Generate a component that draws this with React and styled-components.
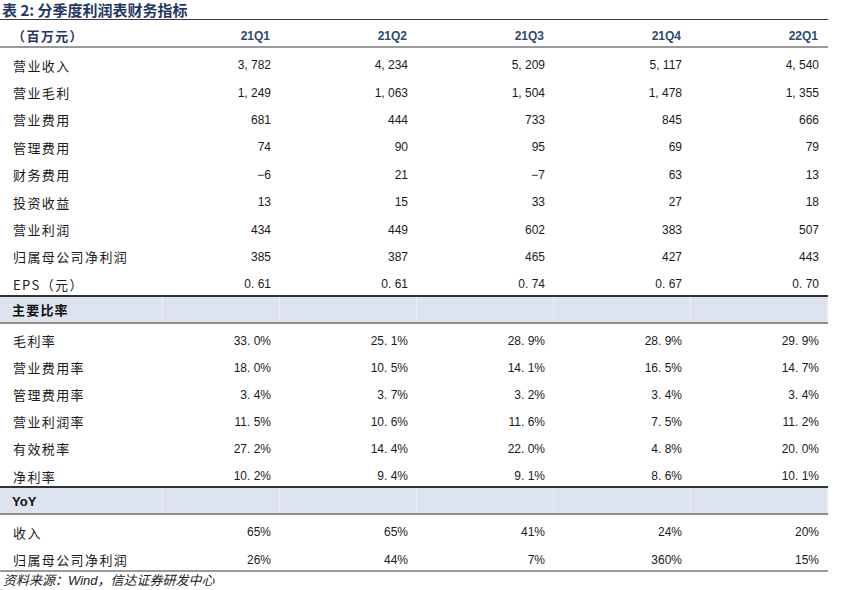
import React from 'react'
import styled, { createGlobalStyle } from 'styled-components'

const GlobalStyle = createGlobalStyle`
  html, body {
    margin: 0;
    padding: 0;
    background: #ffffff;
  }
  body {
    font-family: "Liberation Sans", "Noto Sans CJK SC", sans-serif;
    color: #111;
  }
`

const cols = ['21Q1', '21Q2', '21Q3', '21Q4', '22Q1']

const incomeRows = [
    ['营业收入', '3, 782', '4, 234', '5, 209', '5, 117', '4, 540'],
    ['营业毛利', '1, 249', '1, 063', '1, 504', '1, 478', '1, 355'],
    ['营业费用', '681', '444', '733', '845', '666'],
    ['管理费用', '74', '90', '95', '69', '79'],
    ['财务费用', '−6', '21', '−7', '63', '13'],
    ['投资收益', '13', '15', '33', '27', '18'],
    ['营业利润', '434', '449', '602', '383', '507'],
    ['归属母公司净利润', '385', '387', '465', '427', '443'],
    ['EPS（元）', '0. 61', '0. 61', '0. 74', '0. 67', '0. 70'],
]

const ratioRows = [
    ['毛利率', '33. 0%', '25. 1%', '28. 9%', '28. 9%', '29. 9%'],
    ['营业费用率', '18. 0%', '10. 5%', '14. 1%', '16. 5%', '14. 7%'],
    ['管理费用率', '3. 4%', '3. 7%', '3. 2%', '3. 4%', '3. 4%'],
    ['营业利润率', '11. 5%', '10. 6%', '11. 6%', '7. 5%', '11. 2%'],
    ['有效税率', '27. 2%', '14. 4%', '22. 0%', '4. 8%', '20. 0%'],
    ['净利率', '10. 2%', '9. 4%', '9. 1%', '8. 6%', '10. 1%'],
]

const yoyRows = [
    ['收入', '65%', '65%', '41%', '24%', '20%'],
    ['归属母公司净利润', '26%', '44%', '7%', '360%', '15%'],
]

function App() {
    const renderRows = (rows, h) =>
        rows.map((r) => (
            <Row key={r[0]} $h={h}>
                <Label>{r[0]}</Label>
                {r.slice(1).map((v, i) => (
                    <Value key={i}>{v}</Value>
                ))}
            </Row>
        ))

    return (
        <Page>
            <GlobalStyle />
            <Title>表 2: 分季度利润表财务指标</Title>
            <Table>
                <HeadRow>
                    <HeadLabel>（百万元）</HeadLabel>
                    {cols.map((c) => (
                        <HeadCell key={c}>{c}</HeadCell>
                    ))}
                </HeadRow>
                {renderRows(incomeRows, 27.4)}
                <Band>
                    <BandLabel>主要比率</BandLabel>
                    {cols.map((c) => (
                        <BandCell key={c} />
                    ))}
                </Band>
                {renderRows(ratioRows, 27.1)}
                <Band>
                    <BandLabel $latin>YoY</BandLabel>
                    {cols.map((c) => (
                        <BandCell key={c} />
                    ))}
                </Band>
                {renderRows(yoyRows, 27.5)}
            </Table>
            <Source>
                资料来源：<Wind>Wind</Wind>，信达证券研发中心
            </Source>
        </Page>
    )
}

export default App

const Page = styled.div`
    width: 855px;
    height: 590px;
    overflow: hidden;
`

const Title = styled.div`
    height: 19px;
    padding-left: 2px;
    font-family: "Noto Sans CJK SC", sans-serif;
    font-size: 15px;
    font-weight: 700;
    line-height: 19px;
    color: #1f3864;
    white-space: nowrap;
`

const Table = styled.div`
    width: 828px;
    border-top: 1px solid #3a3a3a;
    border-bottom: 2px solid #9a9a9a;
`

const grid = `
    display: grid;
    grid-template-columns: 163px 117px 137px 137px 137px 137px;
`

const HeadRow = styled.div`
    ${grid}
    height: 26px;
    border-bottom: 2px solid #9a9a9a;
    align-items: center;
`

const HeadLabel = styled.div`
    padding-left: 12px;
    padding-top: 5px;
    font-family: "Noto Sans CJK SC", sans-serif;
    font-size: 13px;
    font-weight: 700;
    letter-spacing: 1.4px;
    color: #1f3864;
`

const HeadCell = styled.div`
    text-align: right;
    padding-right: 10px;
    padding-top: 5px;
    font-family: "Liberation Sans", sans-serif;
    font-size: 12px;
    font-weight: 700;
    color: #2a4a72;
`

const Row = styled.div`
    ${grid}
    height: ${(p) => p.$h}px;
    align-items: center;
    padding-top: 7px;
    box-sizing: border-box;
`

const Label = styled.div`
    padding-left: 13px;
    font-family: "Noto Sans CJK SC", sans-serif;
    font-size: 13px;
    letter-spacing: 1.4px;
    color: #1a1a1a;
    white-space: nowrap;
`

const Value = styled.div`
    text-align: right;
    padding-right: 9px;
    font-family: "Liberation Sans", "Noto Sans CJK SC", sans-serif;
    font-size: 12px;
    color: #1a1a1a;
    white-space: pre;
`

const Band = styled.div`
    ${grid}
    height: 25px;
    background: #dde4f0;
    border-top: 2px solid #333333;
    border-bottom: 2px solid #8f8f8f;
`

const BandLabel = styled.div`
    display: flex;
    align-items: center;
    padding-left: 12px;
    padding-top: 1px;
    font-family: ${(p) => (p.$latin ? '"Liberation Sans"' : '"Noto Sans CJK SC"')}, sans-serif;
    font-size: 13px;
    font-weight: 700;
    letter-spacing: ${(p) => (p.$latin ? '0' : '1.2px')};
    color: #111;
    border-right: 1px solid #e8edf6;
`

const BandCell = styled.div`
    border-right: 1px solid #e8edf6;
`

const Source = styled.div`
    height: 15px;
    padding-left: 3px;
    font-family: "Noto Sans CJK SC", sans-serif;
    font-size: 13px;
    font-style: italic;
    line-height: 15px;
    color: #222;
    white-space: nowrap;
`

const Wind = styled.span`
    font-family: "Liberation Sans", sans-serif;
`
